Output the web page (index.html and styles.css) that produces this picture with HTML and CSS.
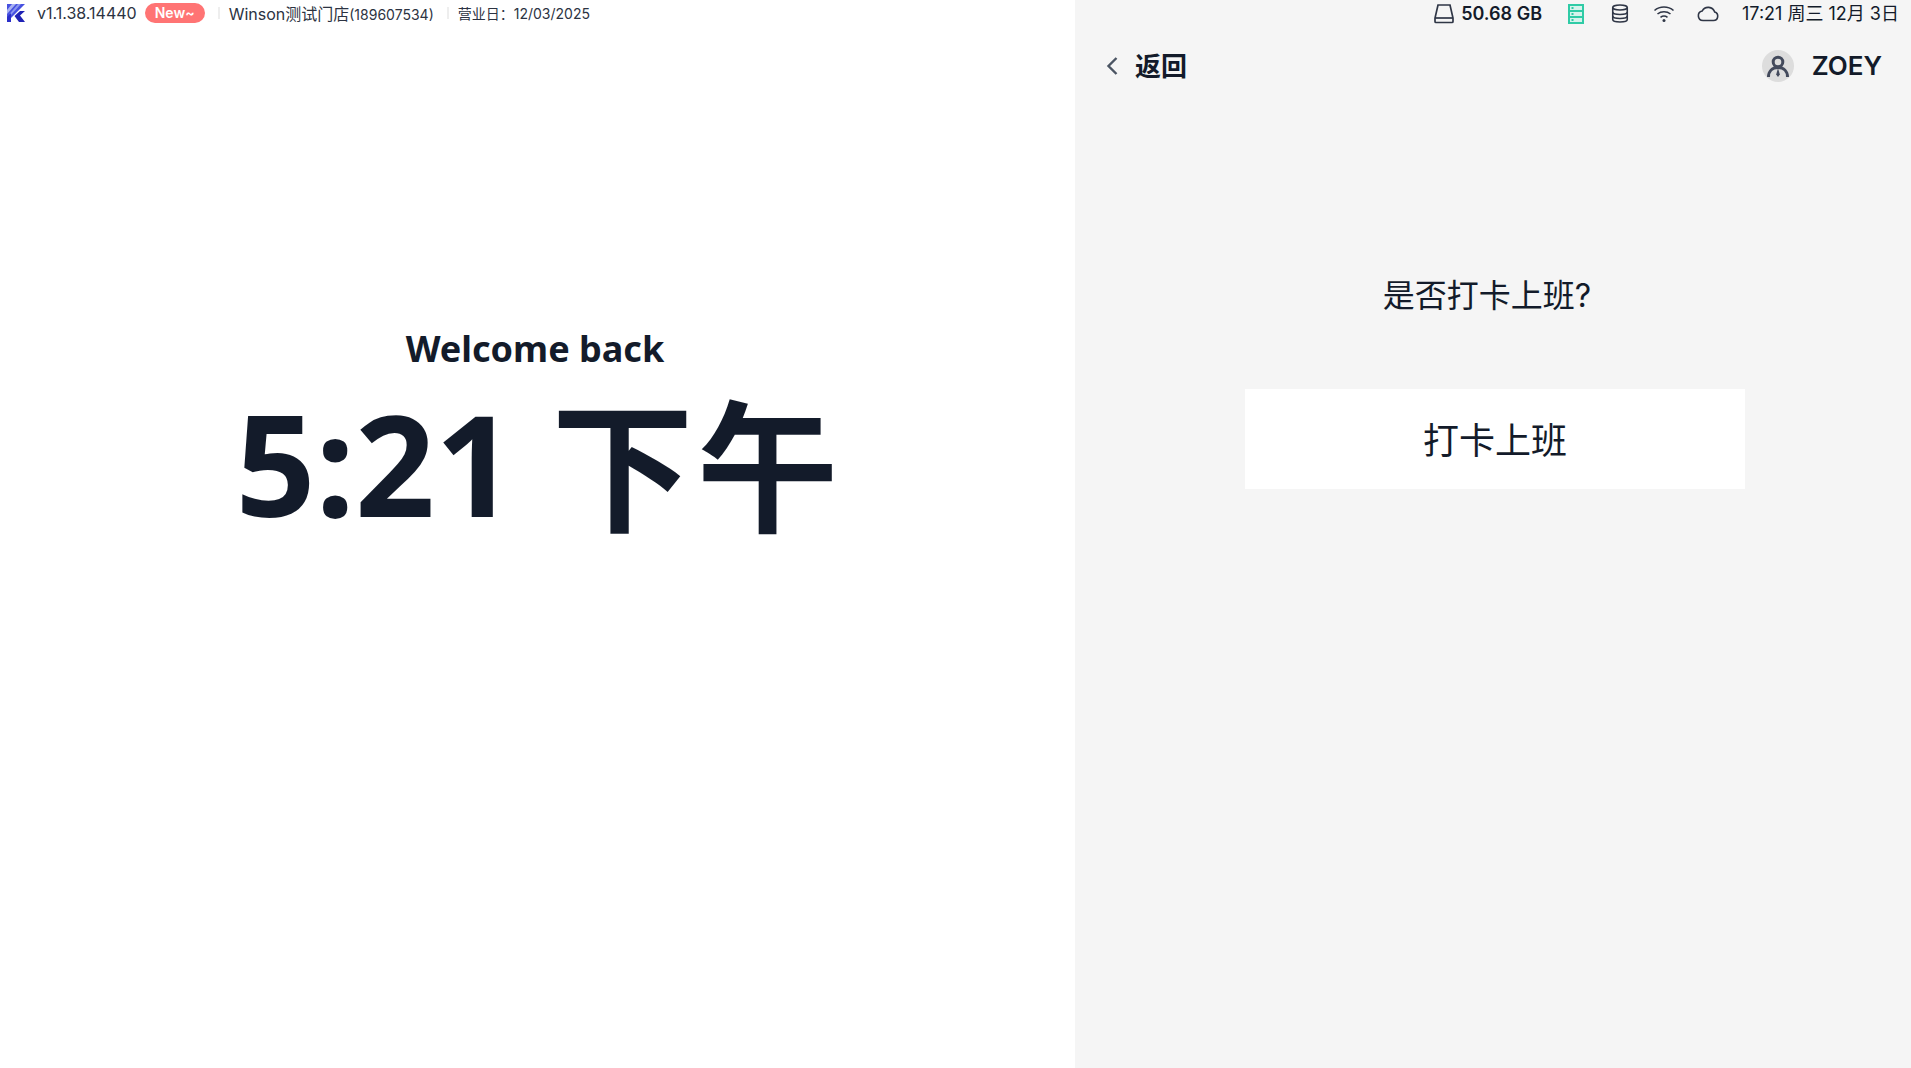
FILE: index.html
```html
<!DOCTYPE html>
<html lang="en">
<head>
<meta charset="UTF-8">
<title>Clock In</title>
<link rel="stylesheet" href="styles.css">
</head>
<body>

<div class="screen">
    <section class="left">
        <header class="status-left">
            <svg class="logo" viewBox="0 0 20 20" width="20" height="20">
                <path d="M1 1h18L1 19z" fill="#4650e0"/>
                <path d="M6 1h4L1 11V7z" fill="#a9b2f2"/>
                <path d="M12 1h3L5 12 3.500 11z" fill="#8b97ee"/>
                <path d="M1 14l4-4v9H1z" fill="#2b2fc9"/>
                <path d="M14 8h5l-5 4.500 5 6.500h-6l-4.500-6z" fill="#1f22b5"/>
            </svg>
            <span class="version">v1.1.38.14440</span>
            <span class="badge">New~</span>
            <span class="sep"></span>
            <span class="store">Winson测试门店<small>(189607534)</small></span>
            <span class="sep"></span>
            <span class="bizdate">营业日：12/03/2025</span>
        </header>
        <div class="welcome">
            <h2>Welcome back</h2>
            <div class="clock">5:21 <span class="meridiem">下午</span></div>
        </div>
    </section>

    <section class="right">
        <header class="status-right">
            <svg class="ico" viewBox="0 0 24 24" width="24" height="24" fill="none" stroke="#2f3646" stroke-width="1.700">
                <path d="M6 5h12l3 13v3.500a1 1 0 0 1-1 1H4a1 1 0 0 1-1-1V18z"/>
                <path d="M3 18h18"/>
            </svg>
            <span class="disk">50.68 GB</span>
            <svg class="ico gap-l" viewBox="0 0 24 24" width="24" height="24" fill="none" stroke="#2fcba6" stroke-width="2">
                <rect x="5" y="5" width="14" height="18" fill="#d5f3ec"/>
                <path d="M5 11h14M5 17h14"/>
                <path d="M7.500 8h2M7.500 14h2M7.500 20h2"/>
            </svg>
            <svg class="ico gap-m" viewBox="0 0 24 24" width="24" height="24" fill="none" stroke="#2f3646" stroke-width="1.600">
                <ellipse cx="12" cy="7.500" rx="7.250" ry="2.500"/>
                <path d="M4.750 7.500v12c0 1.400 3.200 2.500 7.250 2.500s7.250-1.100 7.250-2.500v-12"/>
                <path d="M4.750 12c0 1.400 3.200 2.500 7.250 2.500s7.250-1.100 7.250-2.500M4.750 16c0 1.400 3.200 2.500 7.250 2.500s7.250-1.100 7.250-2.500"/>
            </svg>
            <svg class="ico gap-m" viewBox="0 0 24 24" width="24" height="24" fill="none" stroke="#2f3646" stroke-width="1.600">
                <path d="M2.500 10.500C7.800 5.800 16.200 5.800 21.500 10.500"/>
                <path d="M5.500 14c3.700-3 9.300-3 13 0"/>
                <path d="M8.500 17.300c2-1.500 5-1.500 7 0"/>
                <circle cx="12" cy="20.500" r="1.500" fill="#2f3646" stroke="none"/>
            </svg>
            <svg class="ico gap-m" viewBox="0 0 24 24" width="24" height="24" fill="none" stroke="#2f3646" stroke-width="1.600">
                <path d="M7 20.500h10.500a4.300 4.300 0 0 0 1.200-8.400A6.800 6.800 0 0 0 6.200 11 4.800 4.800 0 0 0 7 20.500z"/>
            </svg>
            <span class="datetime">17:21 周三 12月 3日</span>
        </header>

        <div class="topbar">
            <div class="back">
                <svg viewBox="0 0 14 20" width="14" height="20" fill="none" stroke="#4b5563" stroke-width="2.400">
                    <path d="M11.500 2L3.500 10l8 8"/>
                </svg>
                <span class="back-label">返回</span>
            </div>
            <div class="user">
                <span class="avatar">
                    <svg viewBox="0 0 32 32" width="32" height="32" fill="none" stroke="#434a5c" stroke-width="3">
                        <circle cx="16" cy="12" r="4.800"/>
                        <path d="M6.500 27c0-5.500 3.500-9.500 9.500-9.500s9.500 4 9.500 9.500"/>
                        <path d="M16 18l-1.800 6.500L16 27l1.800-2.500z" fill="#434a5c" stroke="none"/>
                    </svg>
                </span>
                <span class="name">ZOEY</span>
            </div>
        </div>

        <div class="confirm">
            <p class="question">是否打卡上班?</p>
            <button class="punch">打卡上班</button>
        </div>
    </section>
</div>

</body>
</html>
```

FILE: styles.css
```css
:root {
    --ink: #131b2a;
}

* {
    box-sizing: border-box;
}

body {
    margin: 0;
    height: 100vh;
    overflow: hidden;
    color: var(--ink);
    font-family: Inter, "Noto Sans CJK SC", sans-serif;
}

.screen {
    display: flex;
    height: 1068px;
}

.left {
    width: 1075px;
    background: #fff;
}

.right {
    width: 836px;
    background: #f5f5f5;
}

.status-left {
    display: flex;
    align-items: center;
    height: 28px;
    padding: 0 0 2px 6px;
    font-size: 16px;
}

.logo {
    margin-right: 11px;
}

.version {
    color: #2c3342;
}

.badge {
    margin-left: 8px;
    width: 60px;
    height: 20px;
    line-height: 20px;
    text-align: center;
    border-radius: 10px;
    background: #ff7474;
    color: #fff;
    font-size: 14px;
    font-weight: 600;
}

.sep {
    width: 2px;
    height: 12px;
    margin: 0 9px 0 13px;
    background: #eee;
}

.store {
    color: #2c3342;
}

.store small {
    font-size: 14px;
}

.bizdate {
    font-size: 14px;
    color: #2c3342;
}

.welcome {
    padding-top: 296px;
    text-align: center;
}

.welcome h2 {
    margin: 0;
    padding-right: 5px;
    font-family: "Noto Sans", "Noto Sans CJK SC", sans-serif;
    font-size: 36px;
    font-weight: 700;
    line-height: 50px;
}

.clock {
    height: 160px;
    margin-top: 9px;
    padding-left: 2px;
    font-family: "Noto Sans", "Noto Sans CJK SC", sans-serif;
    font-size: 140px;
    font-weight: 700;
    line-height: 160px;
}

.meridiem {
    font-size: 142px;
    letter-spacing: 3px;
    vertical-align: -4px;
}

.status-right {
    display: flex;
    align-items: center;
    justify-content: flex-end;
    height: 28px;
    padding-right: 12px;
}

.ico {
    margin-bottom: 4px;
}

.disk {
    margin-left: 5px;
    padding-bottom: 2px;
    font-size: 18px;
    font-weight: 600;
}

.gap-l {
    margin-left: 22px;
}

.gap-m {
    margin-left: 20px;
}

.datetime {
    margin-left: 22px;
    padding-bottom: 1px;
    font-size: 18px;
    line-height: 26px;
}

.topbar {
    display: flex;
    align-items: center;
    justify-content: space-between;
    height: 50px;
    margin-top: 13px;
    padding: 0 29px 0 30px;
}

.back {
    display: flex;
    align-items: center;
    gap: 16px;
    font-size: 26px;
    font-weight: 700;
}

.back-label {
    padding-bottom: 4px;
}

.user {
    display: flex;
    align-items: center;
    gap: 18px;
}

.avatar {
    display: flex;
    width: 32px;
    height: 32px;
    border-radius: 50%;
    background: #ddd;
}

.name {
    padding-bottom: 2px;
    font-size: 26px;
    font-weight: 600;
}

.confirm {
    display: flex;
    flex-direction: column;
    align-items: center;
    padding: 183px 0 0 4px;
}

.question {
    margin: 0 0 0 -16px;
    font-size: 32px;
    line-height: 44px;
}

.punch {
    width: 500px;
    height: 100px;
    margin-top: 71px;
    padding-bottom: 4px;
    border: none;
    background: #fff;
    color: var(--ink);
    font-family: inherit;
    font-size: 36px;
}
```
